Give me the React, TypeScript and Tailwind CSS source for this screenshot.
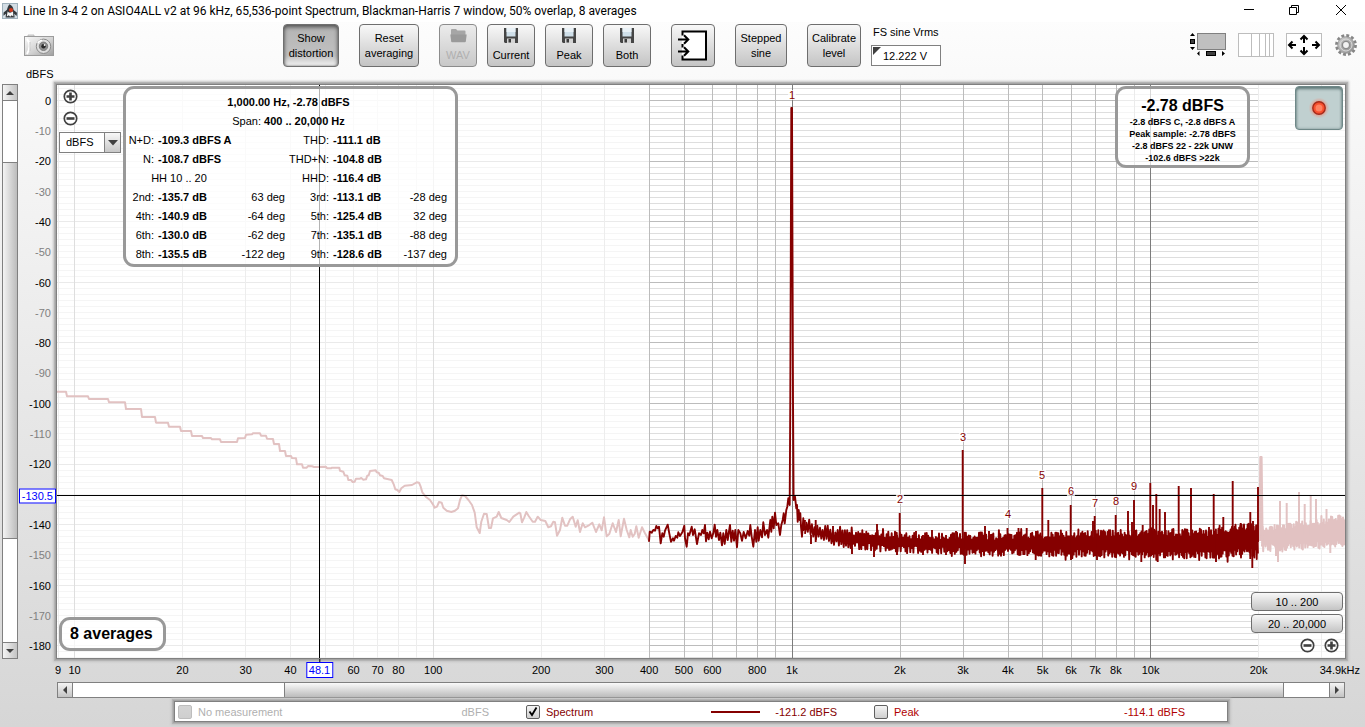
import React from "react";

/* ---------- chart geometry ---------- */

const VIEW = { x: 57, y: 85, w: 1288, h: 573 };
const freqX = (f: number) => 74.7 + 358.7 * (Math.log10(f) - 1);
const dbY = (db: number) => 100.4 - 3.03 * db;
const pctX = (x: number) => `${((x - VIEW.x) / VIEW.w) * 100}%`;
const pctY = (y: number) => `${((y - VIEW.y) / VIEW.h) * 100}%`;
const snap = (v: number) => Math.floor(v) + 0.5;

const SPAN_START = 649;
const SPAN_END = 1258;
const CURSOR_X = 319.5;
const CURSOR_Y = 495.5;

function random(seed: number) {
  let a = seed;
  return () => {
    a = (a + 0x6d2b79f5) | 0;
    let t = Math.imul(a ^ (a >>> 15), 1 | a);
    t = (t + Math.imul(t ^ (t >>> 7), 61 | t)) ^ t;
    return ((t ^ (t >>> 14)) >>> 0) / 4294967296;
  };
}

type Pt = [number, number];

const toPath = (pts: Pt[]) =>
  pts.map(([x, y], i) => `${i ? "L" : "M"}${x.toFixed(1)} ${y.toFixed(1)}`).join("");

/* pairs are stored in thirds of a unit, relative to an origin */
const unpack = (ox: number, oy: number, flat: number[]): Pt[] => {
  const out: Pt[] = [];
  for (let i = 0; i < flat.length; i += 2) out.push([ox + flat[i] / 3, oy + flat[i + 1] / 3]);
  return out;
};

const lowBand: Pt[] = [
  ...unpack(0, 370, [
    171, 65, 198, 65, 201, 79, 264, 79, 267, 87, 324, 87, 327, 97, 375, 97, 378, 117, 423, 117, 426, 141, 465, 141,
    468, 158, 504, 158, 507, 170, 540, 170, 543, 183, 573, 183, 576, 198, 606, 198, 609, 204, 633, 204, 636, 208,
    660, 208, 663, 216, 711, 216, 714, 205, 735, 204, 738, 194, 756, 193, 759, 190, 780, 190, 783, 197, 798, 197,
    801, 206, 819, 207, 822, 222, 837, 222, 840, 243, 855, 243, 858, 258, 873, 258, 876, 264, 888, 265, 891, 283,
    906, 283, 909, 293, 920, 293, 924, 288, 936, 289, 942, 291, 978, 290, 981, 295, 993, 295, 996, 293, 1018, 293,
  ]),
  ...unpack(340, 440, [
    0, 92, 10, 95, 14, 106, 22, 107, 25, 120, 33, 120, 38, 126, 44, 125, 48, 116, 60, 116, 64, 114, 70, 119, 78, 118,
    82, 107, 86, 106, 90, 93, 107, 91, 110, 97, 116, 98, 120, 106, 128, 108, 132, 115, 155, 120, 161, 133, 166, 148,
    172, 150, 178, 156, 184, 145, 194, 137, 216, 135, 230, 127, 237, 128, 242, 140, 247, 157, 257, 170, 270, 180,
    280, 195, 284, 203, 291, 200, 297, 186, 305, 188, 310, 203, 320, 212, 334, 216, 345, 212, 354, 205, 360, 180,
    366, 166, 375, 168, 387, 182, 396, 195, 404, 218, 410, 262, 419, 279, 424, 245, 432, 221, 440, 222, 447, 264,
    453, 264, 459, 235, 470, 230, 476, 216, 484, 234, 500, 240, 508, 246, 520, 230, 538, 218, 541, 220, 546, 247,
    553, 232, 559, 216, 566, 228, 578, 245, 585, 245, 593, 230, 602, 240, 616, 243, 625, 262, 633, 259, 640, 245,
    645, 247, 651, 287, 660, 270, 667, 233, 675, 257, 682, 257, 690, 238, 698, 230, 707, 260, 713, 241, 720, 276,
    728, 250, 735, 262, 745, 257, 757, 248, 768, 276, 778, 253, 785, 271, 792, 232, 800, 289, 808, 282, 818, 250,
    828, 276, 836, 240, 842, 289, 852, 236, 860, 270, 868, 292, 872, 270, 878, 290, 884, 282, 889, 259, 896, 293,
    906, 262, 915, 280, 928, 303,
  ]),
];

const midBand: Pt[] = [
  ...unpack(645, 470, [
    12, 215, 14, 185, 20, 188, 25, 180, 30, 182, 34, 168, 38, 175, 42, 170, 47, 220, 52, 190, 56, 200, 60, 182, 68, 164,
    73, 190, 78, 215, 84, 205, 87, 212, 92, 198, 97, 203, 100, 187, 105, 198, 112, 187, 118, 167, 120, 205, 125, 230,
    129, 190, 133, 196, 140, 170, 144, 195, 149, 178, 156, 222, 162, 190, 168, 195, 172, 180, 176, 190, 180, 165,
    183, 214, 187, 188, 191, 208, 195, 185, 200, 205, 205, 190, 209, 164, 213, 200, 217, 180, 222, 210, 226, 188,
    231, 226, 235, 190, 239, 222, 244, 180, 248, 210, 255, 165, 259, 215, 263, 182, 267, 212, 271, 180, 276, 232,
    280, 180, 286, 190, 291, 212, 296, 186, 302, 205, 308, 183, 313, 197, 316, 165, 320, 200, 325, 230, 330, 180,
    334, 215, 338, 172, 341, 212, 346, 180, 351, 202, 355, 157, 360, 195, 366, 180, 370, 203, 376, 150, 379, 185,
    382, 140, 386, 175, 390, 128, 394, 165, 400, 160, 405, 195, 409, 165, 413, 150, 416, 130, 419, 160, 424, 120,
    427, 110, 430, 85, 434, 105,
  ]),
  [790.3, 400],
  [791.3, 108],
  [792, 108],
  [793, 400],
  [793.6, 500],
  ...unpack(645, 470, [
    446, 90, 450, 80, 454, 115, 456, 105, 458, 155, 461, 120, 464, 150, 466, 130, 468, 170, 471, 200, 475, 145, 477,
    180, 480, 150,
  ]),
];

const lerp = (table: Pt[], x: number) => {
  for (let i = 1; i < table.length; i++) {
    if (x <= table[i][0]) {
      const [x0, y0] = table[i - 1];
      const [x1, y1] = table[i];
      return y0 + ((y1 - y0) * (x - x0)) / (x1 - x0);
    }
  }
  return table[table.length - 1][1];
};

function noise(from: number, to: number, seed: number, top: Pt[], bottom: Pt[], step: Pt[]): Pt[] {
  const rnd = random(seed);
  const pts: Pt[] = [];
  let up = false;
  for (let x = from; x <= to; x += lerp(step, x)) {
    const t = lerp(top, x);
    const b = lerp(bottom, x);
    const r = rnd();
    const burst = rnd() > 0.85 ? rnd() * 4 : 0;
    pts.push([x, up ? t - 3 + r * 8 - burst : b + 3 - r * 8 + burst * 1.4]);
    up = !up;
  }
  return pts;
}

const mainNoise = noise(
  805, 1258, 11,
  [[805, 520], [815, 525], [830, 528], [860, 532], [900, 535], [1000, 536], [1070, 534], [1150, 532], [1210, 532], [1240, 526], [1258, 527]],
  [[805, 535], [830, 541], [850, 546], [900, 550], [1000, 553], [1100, 554], [1215, 556], [1240, 552], [1258, 554]],
  [[805, 1.4], [840, 1.2], [870, 0.95], [900, 0.8], [1000, 0.7], [1258, 0.6]]
);
const highNoise = noise(
  1262, 1345, 5,
  [[1262, 528], [1300, 525], [1345, 517]],
  [[1262, 549], [1300, 547], [1345, 544]],
  [[1262, 0.6], [1345, 0.6]]
);

const spikes: Pt[] = [
  [815.7, 520], [833, 526], [840, 527], [877, 524], [899.7, 513], [916, 531], [932, 530], [956, 531], [962.7, 450],
  [985, 526], [989, 531], [1007.5, 528], [1018.5, 528], [1026.7, 528], [1036, 531], [1042.3, 488], [1048.3, 520],
  [1070.7, 505], [1093, 521], [1094.7, 516], [1115.7, 515], [1128, 511], [1134, 500], [1132, 522], [1142.7, 525],
  [1150.3, 483], [1153, 505], [1156.3, 494], [1159.7, 509], [1165, 512], [1178.7, 486], [1191, 488], [1213.7, 494],
  [1209, 527], [1223.3, 517], [1232.7, 481], [1240.7, 523], [1250.3, 512], [1253, 521], [1258, 487],
];
const dips: Pt[] = [
  [811, 544], [852, 554], [874, 557], [897, 555], [923, 555], [946, 555], [965, 564], [1035.7, 560], [1071, 560],
  [1097, 560], [1141.3, 562], [1157.7, 562], [1216, 562], [1250.3, 559], [1252.3, 568],
];
const fadedSpikes: Pt[] = [
  [1280, 501], [1286.7, 503], [1299, 492], [1304.7, 504], [1310.7, 495], [1316, 499], [1326.5, 509],
];
const fadedDips: Pt[] = [[1276, 556], [1278, 562], [1330.3, 553]];

const verticals: number[] = [9];
[10, 100, 1000, 10000].forEach((d) => {
  for (let m = 1; m <= 9; m++) if (d * m < 34900) verticals.push(d * m);
});
const horizontals: number[] = [];
for (let db = 4; db >= -184; db -= 2) horizontals.push(db);

const harmonics: { n: string; x: number; y: number }[] = [
  { n: "1", x: 792, y: 95 },
  { n: "2", x: 900, y: 499 },
  { n: "3", x: 963, y: 437 },
  { n: "4", x: 1008, y: 514 },
  { n: "5", x: 1042, y: 475 },
  { n: "6", x: 1071, y: 491 },
  { n: "7", x: 1095, y: 503 },
  { n: "8", x: 1116, y: 501 },
  { n: "9", x: 1134, y: 486 },
];

const yTicks = Array.from({ length: 19 }, (_, i) => -10 * i).filter((v) => v !== -130);
const xTicks: [string, number][] = [
  ["9", 9], ["10", 10], ["20", 20], ["30", 30], ["40", 40], ["60", 60], ["70", 70], ["80", 80], ["100", 100],
  ["200", 200], ["300", 300], ["400", 400], ["500", 500], ["600", 600], ["800", 800], ["1k", 1000], ["2k", 2000],
  ["3k", 3000], ["4k", 4000], ["5k", 5000], ["6k", 6000], ["7k", 7000], ["8k", 8000], ["10k", 10000], ["20k", 20000],
  ["34.9kHz", 33700],
];

function Plot() {
  const right = VIEW.x + VIEW.w;
  const bottom = VIEW.y + VIEW.h;
  return (
    <svg
      className="absolute inset-0 h-full w-full"
      viewBox={`${VIEW.x} ${VIEW.y} ${VIEW.w} ${VIEW.h}`}
      preserveAspectRatio="none"
      aria-label="Spectrum"
      role="img"
    >
      <g shapeRendering="crispEdges" strokeWidth="1">
        {horizontals.map((db) => {
          const y = snap(dbY(db));
          const major = db % 20 === 0;
          return (
            <g key={db}>
              <path d={`M${VIEW.x} ${y}H${right}`} stroke={major ? "#eaeaea" : "#f5f5f5"} />
              <path d={`M${SPAN_START} ${y}H${SPAN_END}`} stroke={major ? "#bcbcbc" : "#dedede"} />
            </g>
          );
        })}
        {verticals.map((f) => {
          const x = snap(freqX(f));
          const inside = f >= 400 && f < 20000;
          const decade = f === 10 || f === 100 || f === 1000 || f === 10000;
          const stroke = inside ? (decade ? "#7c7c7c" : "#bcbcbc") : decade ? "#dedede" : "#ededed";
          return <path key={f} d={`M${x} ${VIEW.y}V${bottom}`} stroke={stroke} />;
        })}
      </g>
      <g fill="none" stroke="#e2c2c2" strokeWidth="2" strokeLinejoin="round">
        <path d={toPath(lowBand)} />
        <path d={toPath(highNoise)} />
        <path d="M1259.5 540L1260.3 457L1261.6 457L1262.6 540Z" fill="#e2c2c2" />
        {fadedSpikes.map(([x, y]) => (
          <path key={x} d={`M${x} 535V${y}`} />
        ))}
        {fadedDips.map(([x, y]) => (
          <path key={x} d={`M${x} 540V${y}`} />
        ))}
      </g>
      <g fill="none" stroke="#850000" strokeWidth="1.9" strokeLinejoin="round">
        <path d={toPath(midBand)} />
        <path d={toPath(mainNoise)} />
        {spikes.map(([x, y]) => (
          <path key={x} d={`M${x} 542V${y}`} />
        ))}
        {dips.map(([x, y]) => (
          <path key={x} d={`M${x} 535V${y}`} />
        ))}
      </g>
      <g shapeRendering="crispEdges" stroke="#000" strokeWidth="1">
        <path d={`M${VIEW.x} ${CURSOR_Y}H${right}`} />
        <path d={`M${CURSOR_X} ${VIEW.y}V${bottom}`} />
      </g>
    </svg>
  );
}

/* ---------- icons ---------- */

function AppIcon() {
  return (
    <svg width="16" height="16" viewBox="0 0 16 16" aria-hidden="true">
      <rect x=".5" y=".5" width="15" height="15" fill="#d3dde4" stroke="#9fb0bb" />
      <path d="M7.500 1.200C6 2.800 5.400 5 5 6.800L1.600 9.400L1.400 12.800L4 10.800L3.600 14.600H12.600L12.200 10.800L14.600 13L15 9.800L11.600 7C11.400 4.600 9.800 2.200 7.500 1.200Z" fill="#33383c" />
      <path d="M5.600 8.400Q8.200 11 11 8.200L11.400 13.600L9.600 12.200L8.200 13.800L6.800 12.200L4.800 13.600Z" fill="#f6f6f6" />
      <circle cx="9" cy="7" r="2.100" fill="#d63a1e" />
    </svg>
  );
}

function CameraIcon() {
  return (
    <svg width="31" height="23" viewBox="0 0 31 23" aria-hidden="true">
      <defs>
        <linearGradient id="cam" x1="0" y1="0" x2="1" y2="1">
          <stop offset="0" stopColor="#fafafa" />
          <stop offset=".55" stopColor="#d2d2d2" />
          <stop offset="1" stopColor="#9e9e9e" />
        </linearGradient>
      </defs>
      <path d="M4 1H10V3H4Z" fill="#dcdcdc" stroke="#b4b4b4" strokeWidth=".8" />
      <rect x=".5" y="2.500" width="29" height="19" fill="url(#cam)" stroke="#9c9c9c" />
      <path d="M3 5Q8 11 3 20" fill="none" stroke="#ffffff" strokeWidth="2" />
      <path d="M6 8V17" stroke="#c4c4c4" />
      <circle cx="19.500" cy="12.300" r="7.200" fill="#dedede" stroke="#8a8a8a" />
      <circle cx="19.500" cy="12.300" r="4.200" fill="#8e8e8e" stroke="#7f7f7f" />
      <circle cx="19.500" cy="12.300" r="2.200" fill="#2a2a2a" />
      <circle cx="20.600" cy="11" r=".9" fill="#f4f4f4" />
      <path d="M13.600 9A7 7 0 0 1 18 6.200" fill="none" stroke="#fff" strokeWidth="1.400" />
    </svg>
  );
}

function FloppyIcon() {
  return (
    <svg width="14" height="15" viewBox="0 0 14 15" aria-hidden="true">
      <path d="M0 0H14V15H1L0 14Z" fill="#454545" />
      <path d="M2.500 0H11.500V8.500H2.500Z" fill="#cfdfe9" />
      <path d="M2.500 0H11.500V4H2.500Z" fill="#e9f1f6" />
      <path d="M3 10.500H11V15H3Z" fill="#d4d4d4" />
      <path d="M4.500 11H7V14.500H4.500Z" fill="#3b3b3b" />
    </svg>
  );
}

function FolderIcon() {
  return (
    <svg width="17" height="15" viewBox="0 0 17 15" aria-hidden="true">
      <path d="M1 2Q1 1 2 1H6L7.500 2.500H14.500Q15.500 2.500 15.500 3.500V7H1Z" fill="#a6a6a6" />
      <path d="M.3 6.500H16.700L15.800 13.500Q15.600 14.200 15 14.200H2Q1.300 14.200 1.200 13.500Z" fill="#9a9a9a" />
    </svg>
  );
}

function InputIcon() {
  return (
    <svg width="31" height="31" viewBox="0 0 31 31" aria-hidden="true" fill="none" stroke="#000">
      <rect x="4" y="1" width="24" height="28" fill="#fff" stroke="none" />
      <path d="M4.500 5.500V1.500H28V29.500H4.500V25.500M4.500 14V17.500" strokeWidth="2" />
      <path d="M0 9.500H10M6 5.200L10.300 9.500L6 13.800" strokeWidth="2" />
      <path d="M0 21.500H10M6 17.200L10.300 21.500L6 25.800" strokeWidth="2" />
    </svg>
  );
}

function ScrollIcon() {
  return (
    <svg width="36" height="25" viewBox="0 0 36 25" aria-hidden="true">
      <rect x="7.500" y=".5" width="28" height="16" fill="#c0c0c0" stroke="#808080" />
      <path d="M0 3H5L2.500 0ZM0 14H5L2.500 17ZM9.500 18V23L7 20.500ZM32 18V23L35 20.500Z" fill="#000" />
      <rect x=".5" y="6.500" width="4" height="4" fill="#404040" stroke="#000" />
      <rect x="16.500" y="18.500" width="9" height="4" fill="#404040" stroke="#000" />
    </svg>
  );
}

function GridIcon() {
  return (
    <svg width="36" height="24" viewBox="0 0 36 24" aria-hidden="true">
      <rect x=".5" y=".5" width="35" height="23" fill="#fff" stroke="#bdbdbd" />
      <path d="M13.500 0V24M21.500 0V24M27.500 0V24M31.500 0V24" stroke="#bdbdbd" />
    </svg>
  );
}

function LimitsIcon() {
  return (
    <svg width="36" height="24" viewBox="0 0 36 24" aria-hidden="true">
      <rect x=".5" y=".5" width="35" height="23" fill="#fff" stroke="#bdbdbd" />
      <path
        d="M18 3V10M14.500 6.500L18 3L21.500 6.500M18 14V21M14.500 17.500L18 21L21.500 17.500M3 12H10M6.500 8.500L3 12L6.500 15.500M26 12H33M29.500 8.500L33 12L29.500 15.500"
        fill="none"
        stroke="#000"
        strokeWidth="2"
      />
    </svg>
  );
}

function GearIcon() {
  return (
    <svg width="22" height="22" viewBox="0 0 22 22" aria-hidden="true">
      <defs>
        <linearGradient id="gear" x1="0" y1="0" x2="1" y2="1">
          <stop offset="0" stopColor="#d0d0d0" />
          <stop offset="1" stopColor="#8c8c8c" />
        </linearGradient>
      </defs>
      <circle cx="11" cy="11" r="9.500" fill="none" stroke="#868686" strokeWidth="2.800" strokeDasharray="2.900 2.074" />
      <circle cx="11" cy="11" r="8.300" fill="url(#gear)" stroke="#8c8c8c" strokeWidth=".7" />
      <circle cx="11" cy="11" r="6" fill="none" stroke="#dcdcdc" strokeWidth="1" />
      <circle cx="11" cy="11" r="4.300" fill="#8c8c8c" />
      <circle cx="11" cy="11" r="2.900" fill="#f2f2f2" />
    </svg>
  );
}

function ZoomGlyph({ plus }: { plus?: boolean }) {
  return (
    <svg width="15" height="15" viewBox="0 0 15 15" aria-hidden="true" fill="none" stroke="#404040">
      <circle cx="7.500" cy="7.500" r="6.200" fill="#fff" strokeWidth="1.700" />
      <path d={plus ? "M3.500 7.500H11.500M7.500 3.500V11.500" : "M3.500 7.500H11.500"} strokeWidth="2.600" />
    </svg>
  );
}

function Arrow({ dir }: { dir: "up" | "down" | "left" | "right" }) {
  const d = { up: "M0 6H8L4 2Z", down: "M0 2H8L4 6Z", left: "M6 0V8L2 4Z", right: "M2 0V8L6 4Z" }[dir];
  return (
    <svg width="8" height="8" viewBox="0 0 8 8" aria-hidden="true">
      <path d={d} fill="#404040" />
    </svg>
  );
}

/* ---------- controls ---------- */

const face = "rounded-[4px] border border-[#6e6e6e] bg-linear-to-b from-[#f8f8f8] to-[#c4c4c4]";

function ToolButton({ className = "", children, ...rest }: React.ButtonHTMLAttributes<HTMLButtonElement>) {
  return (
    <button
      type="button"
      className={`flex h-[43px] shrink-0 flex-col items-center justify-center text-[11px] leading-[15px] ${className || face}`}
      {...rest}
    >
      {children}
    </button>
  );
}

function SaveButton({ children }: { children: string }) {
  return (
    <ToolButton className={`w-12 ${face}`}>
      <FloppyIcon />
      <span className="mt-[5px]">{children}</span>
    </ToolButton>
  );
}

function VerticalScrollbar() {
  const cap = "flex h-4 shrink-0 items-center justify-center bg-linear-to-r from-[#f4f4f4] to-[#c4c4c4]";
  return (
    <div className="ml-[2px] flex w-4 shrink-0 flex-col border border-[#808080] bg-white">
      <button type="button" aria-label="Scroll up" className={`${cap} border-b border-[#808080]`}>
        <Arrow dir="up" />
      </button>
      <div className="flex-[61]" />
      <div className="flex-[377] border-y border-[#808080] bg-linear-to-r from-[#f4f4f4] to-[#bcbcbc]" />
      <div className="flex-[103]" />
      <button type="button" aria-label="Scroll down" className={`${cap} border-t border-[#808080]`}>
        <Arrow dir="down" />
      </button>
    </div>
  );
}

function HorizontalScrollbar() {
  const cap = "flex w-[15px] shrink-0 items-center justify-center bg-linear-to-b from-[#f4f4f4] to-[#c4c4c4]";
  return (
    <div className="mr-[20px] ml-[57px] flex h-4 border border-[#808080] bg-white">
      <button type="button" aria-label="Scroll left" className={`${cap} border-r border-[#808080]`}>
        <Arrow dir="left" />
      </button>
      <div className="flex-[211]" />
      <div className="flex-[1000] border-x border-[#808080] bg-linear-to-b from-[#fafafa] to-[#bcbcbc]" />
      <div className="flex-[45]" />
      <button type="button" aria-label="Scroll right" className={`${cap} border-l border-[#808080]`}>
        <Arrow dir="right" />
      </button>
    </div>
  );
}

function LegendItem(props: {
  id: string;
  label: string;
  value: string;
  color: string;
  checked?: boolean;
  disabled?: boolean;
  line?: boolean;
}) {
  const { id, label, value, color, checked, disabled, line } = props;
  return (
    <div className={`flex items-center pr-[34px] pl-[3px] leading-[15px] ${color}`}>
      <span className="relative flex">
        <input
          id={id}
          type="checkbox"
          defaultChecked={checked}
          disabled={disabled}
          className="peer h-[14px] w-[14px] appearance-none rounded-[2px] border border-[#606060] bg-linear-to-b from-[#f4f4f4] to-[#cfcfcf] disabled:border-[#bdbdbd] disabled:from-[#d4d4d4]"
        />
        <svg
          className="pointer-events-none absolute inset-0 hidden peer-checked:block"
          width="14"
          height="14"
          viewBox="0 0 14 14"
          aria-hidden="true"
        >
          <path d="M3.500 6.500L6 10L10.500 2.500" fill="none" stroke="#000" strokeWidth="1.800" />
        </svg>
      </span>
      <label htmlFor={id} className="pt-[2px] pl-[6px]">
        {label}
      </label>
      {line && <span className="ml-auto h-[2px] w-[49px] bg-[#850000]" />}
      <span className={line ? "w-[77px] pt-[2px] text-right" : "ml-auto pt-[2px]"}>{value}</span>
    </div>
  );
}

/* ---------- readouts ---------- */

const panel = "absolute rounded-[11px] border-3 border-[#999] bg-white/70";

const summary: [string, string, string, string][] = [
  ["N+D:", "-109.3 dBFS A", "THD:", "-111.1 dB"],
  ["N:", "-108.7 dBFS", "THD+N:", "-104.8 dB"],
];
const levels: string[][] = [
  ["2nd:", "-135.7 dB", "63 deg", "3rd:", "-113.1 dB", "-28 deg"],
  ["4th:", "-140.9 dB", "-64 deg", "5th:", "-125.4 dB", "32 deg"],
  ["6th:", "-130.0 dB", "-62 deg", "7th:", "-135.1 dB", "-88 deg"],
  ["8th:", "-135.5 dB", "-122 deg", "9th:", "-128.6 dB", "-137 deg"],
];

function DistortionPanel() {
  const key = "text-right whitespace-nowrap";
  const val = "pl-1 font-bold whitespace-nowrap";
  return (
    <div className={`${panel} top-[1px] left-[66px] w-[335px] pt-1 pr-[8px]`}>
      <table className="w-full table-fixed border-collapse text-[11px] leading-[19px]">
        <colgroup>
          <col className="w-[28px]" />
          <col className="w-[78px]" />
          <col className="w-[53px]" />
          <col className="w-[44px]" />
          <col className="w-[61px]" />
          <col />
        </colgroup>
        <tbody>
          <tr>
            <td colSpan={6} className="pl-1 text-center font-bold">
              1,000.00 Hz, -2.78 dBFS
            </td>
          </tr>
          <tr>
            <td colSpan={6} className="pl-1 text-center">
              Span: <b>400 .. 20,000 Hz</b>
            </td>
          </tr>
          {summary.map((r) => (
            <tr key={r[0]}>
              <td className={key}>{r[0]}</td>
              <td className={val}>{r[1]}</td>
              <td colSpan={2} className={key}>{r[2]}</td>
              <td className={val}>{r[3]}</td>
              <td />
            </tr>
          ))}
          <tr>
            <td colSpan={2} className="text-center">HH 10 .. 20</td>
            <td colSpan={2} className={key}>HHD:</td>
            <td className={val}>-116.4 dB</td>
            <td />
          </tr>
          {levels.map((r) => (
            <tr key={r[0]}>
              <td className={key}>{r[0]}</td>
              <td className={val}>{r[1]}</td>
              <td className={key}>{r[2]}</td>
              <td className={key}>{r[3]}</td>
              <td className={val}>{r[4]}</td>
              <td className={key}>{r[5]}</td>
            </tr>
          ))}
        </tbody>
      </table>
    </div>
  );
}

function LevelPanel() {
  return (
    <div className={`${panel} top-[1px] right-[95px] w-[135px] pt-[7px] pb-[1px] text-center font-bold`}>
      <div className="text-[16px] leading-5">-2.78 dBFS</div>
      <div className="text-[9px] leading-3 whitespace-nowrap">
        <div>-2.8 dBFS C, -2.8 dBFS A</div>
        <div>Peak sample: -2.78 dBFS</div>
        <div>-2.8 dBFS 22 - 22k UNW</div>
        <div>-102.6 dBFS &gt;22k</div>
      </div>
    </div>
  );
}

const frame =
  "border border-[#808080] bg-white shadow-[0_0_0_1px_#a4a4a4,0_0_0_2px_#b4b4b4,0_0_2px_3px_#c4c4c4]";

function Chart() {
  return (
    <div className={`relative mr-[19px] flex-1 ${frame}`}>
      <Plot />
      {harmonics.map((h) => (
        <span
          key={h.n}
          className="absolute -translate-x-1/2 -translate-y-1/2 bg-white/75 px-px text-[11px] leading-[10px] text-[#850000]"
          style={{ left: pctX(h.x), top: pctY(h.y) }}
        >
          {h.n}
        </span>
      ))}
      <DistortionPanel />
      <LevelPanel />
      <div className="absolute top-1 left-[2px] flex flex-col items-start">
        <button type="button" aria-label="Zoom in vertically" className="mb-[7px] ml-1">
          <ZoomGlyph plus />
        </button>
        <button type="button" aria-label="Zoom out vertically" className="mb-[6px] ml-1">
          <ZoomGlyph />
        </button>
        <span className="relative flex h-[21px] w-[62px] border border-[#808080] bg-white">
          <select aria-label="Units" className="w-full appearance-none pl-[6px] text-[11px] leading-[19px] outline-none">
            <option>dBFS</option>
          </select>
          <span className="pointer-events-none absolute inset-y-0 right-0 flex w-4 items-center justify-center border-l border-[#808080] bg-linear-to-b from-[#f8f8f8] to-[#c8c8c8]">
            <svg width="10" height="6" viewBox="0 0 10 6" aria-hidden="true">
              <path d="M0 0H10L5 5.500Z" fill="#404040" />
            </svg>
          </span>
        </span>
      </div>
      <button
        type="button"
        aria-label="Record"
        className="absolute top-[1px] right-[2px] flex h-[44px] w-[48px] items-center justify-center rounded-[4px] border border-[#6f8888] bg-[#c0d0d0] shadow-[inset_0_2px_3px_#5f7878,inset_0_0_3px_#7f9696]"
      >
        <svg width="22" height="22" viewBox="0 0 22 22" aria-hidden="true">
          <defs>
            <radialGradient id="glow">
              <stop offset=".5" stopColor="#ff5a3c" stopOpacity=".6" />
              <stop offset="1" stopColor="#ff8a70" stopOpacity="0" />
            </radialGradient>
          </defs>
          <circle cx="11" cy="11" r="10.500" fill="url(#glow)" />
          <circle cx="11" cy="11" r="6.200" fill="#f8502e" stroke="#a52a1a" strokeWidth="1.400" />
          <circle cx="11" cy="11" r="3.500" fill="#ff8262" />
        </svg>
      </button>
      <div className={`${panel} bottom-[7px] left-[2px] pr-[10px] pl-2 text-[16px] leading-[28px] font-bold`}>
        8 averages
      </div>
      <div className="absolute right-[2px] bottom-[5px] flex w-[92px] flex-col gap-[3px]">
        <button type="button" className={`h-[19px] text-[11px] leading-[18px] ${face}`}>10 .. 200</button>
        <button type="button" className={`h-[19px] text-[11px] leading-[18px] ${face}`}>20 .. 20,000</button>
        <div className="flex justify-end gap-[9px] pt-[2px] pr-1">
          <button type="button" aria-label="Zoom out horizontally">
            <ZoomGlyph />
          </button>
          <button type="button" aria-label="Zoom in horizontally">
            <ZoomGlyph plus />
          </button>
        </div>
      </div>
    </div>
  );
}

export default function App() {
  return (
    <div className="flex min-h-screen flex-col bg-linear-to-b from-[#fefefe] to-[#d6d6d6] font-['Liberation_Sans',Arial,sans-serif] text-black">
      <header className="flex h-[22px] items-center bg-white pl-[2px]">
        <AppIcon />
        <h1 className="pl-[5px] font-[Roboto,'Open_Sans',sans-serif] text-[12px] leading-[20px] whitespace-nowrap">
          Line In 3-4 2 on ASIO4ALL v2 at 96 kHz, 65,536-point Spectrum, Blackman-Harris 7 window, 50% overlap, 8 averages
        </h1>
        <div className="mr-[18px] ml-auto flex gap-[34px]">
          <button type="button" aria-label="Minimize">
            <svg width="12" height="12" viewBox="0 0 12 12" aria-hidden="true">
              <path d="M1 4.500H11" stroke="#000" />
            </svg>
          </button>
          <button type="button" aria-label="Restore">
            <svg width="12" height="12" viewBox="0 0 12 12" fill="none" stroke="#000" aria-hidden="true">
              <path d="M.5 2.500H7.500V9.500H.5ZM2.500 2.500V.5H9.500V7.500H7.500" />
            </svg>
          </button>
          <button type="button" aria-label="Close">
            <svg width="12" height="12" viewBox="0 0 12 12" stroke="#000" aria-hidden="true">
              <path d="M1 0L11 10M11 0L1 10" />
            </svg>
          </button>
        </div>
      </header>

      <div className="flex items-start pt-[2px] pr-2">
        <div className="w-[283px] shrink-0 pt-[10px] pl-6">
          <button type="button" aria-label="Capture image" className="block">
            <CameraIcon />
          </button>
        </div>
        <div className="flex items-start gap-5">
          <ToolButton
            aria-pressed="true"
            className="w-14 rounded-[4px] border border-[#707070] bg-[#bebebe] bg-linear-to-b from-[#b4b4b4] via-[#c0c0c0] via-75% to-[#f4f4f4] shadow-[inset_0_2px_4px_#505050,inset_0_0_2px_#808080]"
          >
            <span>Show</span>
            <span>distortion</span>
          </ToolButton>
          <ToolButton className={`w-[60px] ${face}`}>
            <span>Reset</span>
            <span>averaging</span>
          </ToolButton>
          <div className="flex gap-[10px]">
            <ToolButton
              disabled
              className="w-[38px] rounded-[4px] border border-[#8c8c8c] bg-linear-to-b from-[#ececec] to-[#c8c8c8] text-[#b0b0b0]"
            >
              <FolderIcon />
              <span className="mt-[5px]">WAV</span>
            </ToolButton>
            <SaveButton>Current</SaveButton>
            <SaveButton>Peak</SaveButton>
            <SaveButton>Both</SaveButton>
          </div>
          <ToolButton aria-label="Input channels" className={`w-11 ${face}`}>
            <InputIcon />
          </ToolButton>
          <ToolButton className={`w-[52px] ${face}`}>
            <span>Stepped</span>
            <span>sine</span>
          </ToolButton>
          <ToolButton className={`w-[54px] ${face}`}>
            <span>Calibrate</span>
            <span>level</span>
          </ToolButton>
        </div>
        <div className="ml-[10px] flex w-[70px] flex-col">
          <label htmlFor="vrms" className="pt-px pb-[5px] pl-[2px] text-[11px] leading-[15px] whitespace-nowrap">
            FS sine Vrms
          </label>
          <span className="relative flex">
            <input
              id="vrms"
              type="text"
              defaultValue="12.222 V"
              className="h-[21px] w-full border border-[#808080] bg-white pl-[11px] text-[11px] outline-none"
            />
            <svg className="absolute top-[2px] left-[2px]" width="8" height="8" viewBox="0 0 8 8" aria-hidden="true">
              <path d="M0 0H8L0 8Z" fill="#404040" />
            </svg>
          </span>
        </div>
        <div className="ml-auto flex items-start gap-3 pt-[9px]">
          <button type="button" aria-label="Scrollbars">
            <ScrollIcon />
          </button>
          <button type="button" aria-label="Frequency axis">
            <GridIcon />
          </button>
          <button type="button" aria-label="Graph limits">
            <LimitsIcon />
          </button>
          <button type="button" aria-label="Graph controls" className="pt-px pl-px">
            <GearIcon />
          </button>
        </div>
      </div>

      <div className="h-[17px] pl-[26px] text-[11px] leading-[14px]">dBFS</div>

      <main className="flex min-h-[420px] flex-1">
        <VerticalScrollbar />
        <div className="relative my-px w-[38px] shrink-0 text-[11px] leading-[15px]">
          {yTicks.map((v) => (
            <span
              key={v}
              className={`absolute right-[5px] -translate-y-1/2 ${v % 20 ? "text-[#808080]" : "text-black"}`}
              style={{ top: pctY(dbY(v) + 0.3) }}
            >
              {v}
            </span>
          ))}
          <span
            className="absolute right-0 z-10 -translate-y-1/2 border border-[#0000ff] bg-white px-[2px] leading-[13px] text-[#0000ff]"
            style={{ top: pctY(CURSOR_Y) }}
          >
            -130.5
          </span>
        </div>
        <Chart />
      </main>

      <div className="relative mr-[20px] ml-[57px] h-[23px] text-[11px] leading-[15px]">
        {xTicks.map(([label, f]) => (
          <span
            key={label}
            className="absolute top-1 -translate-x-1/2 whitespace-nowrap"
            style={{ left: pctX(freqX(f) - 0.2) }}
          >
            {label}
          </span>
        ))}
        <span
          className="absolute top-0 z-10 flex -translate-x-1/2 flex-col items-center"
          style={{ left: pctX(CURSOR_X) }}
        >
          <span className="h-[3px] w-px bg-black" />
          <span className="border border-[#0000ff] bg-white px-[2px] leading-[14px] text-[#0000ff]">48.1</span>
        </span>
      </div>

      <HorizontalScrollbar />

      <div className={`mt-[3px] mr-[137px] mb-[5px] ml-[174px] grid h-[21px] grid-cols-3 pr-[8px] text-[11px] ${frame}`}>
        <LegendItem id="none" label="No measurement" value="dBFS" color="text-[#b0b0b0]" disabled />
        <LegendItem id="spectrum" label="Spectrum" value="-121.2 dBFS" color="text-[#850000]" checked line />
        <LegendItem id="peak" label="Peak" value="-114.1 dBFS" color="text-[#b00000]" />
      </div>
    </div>
  );
}
